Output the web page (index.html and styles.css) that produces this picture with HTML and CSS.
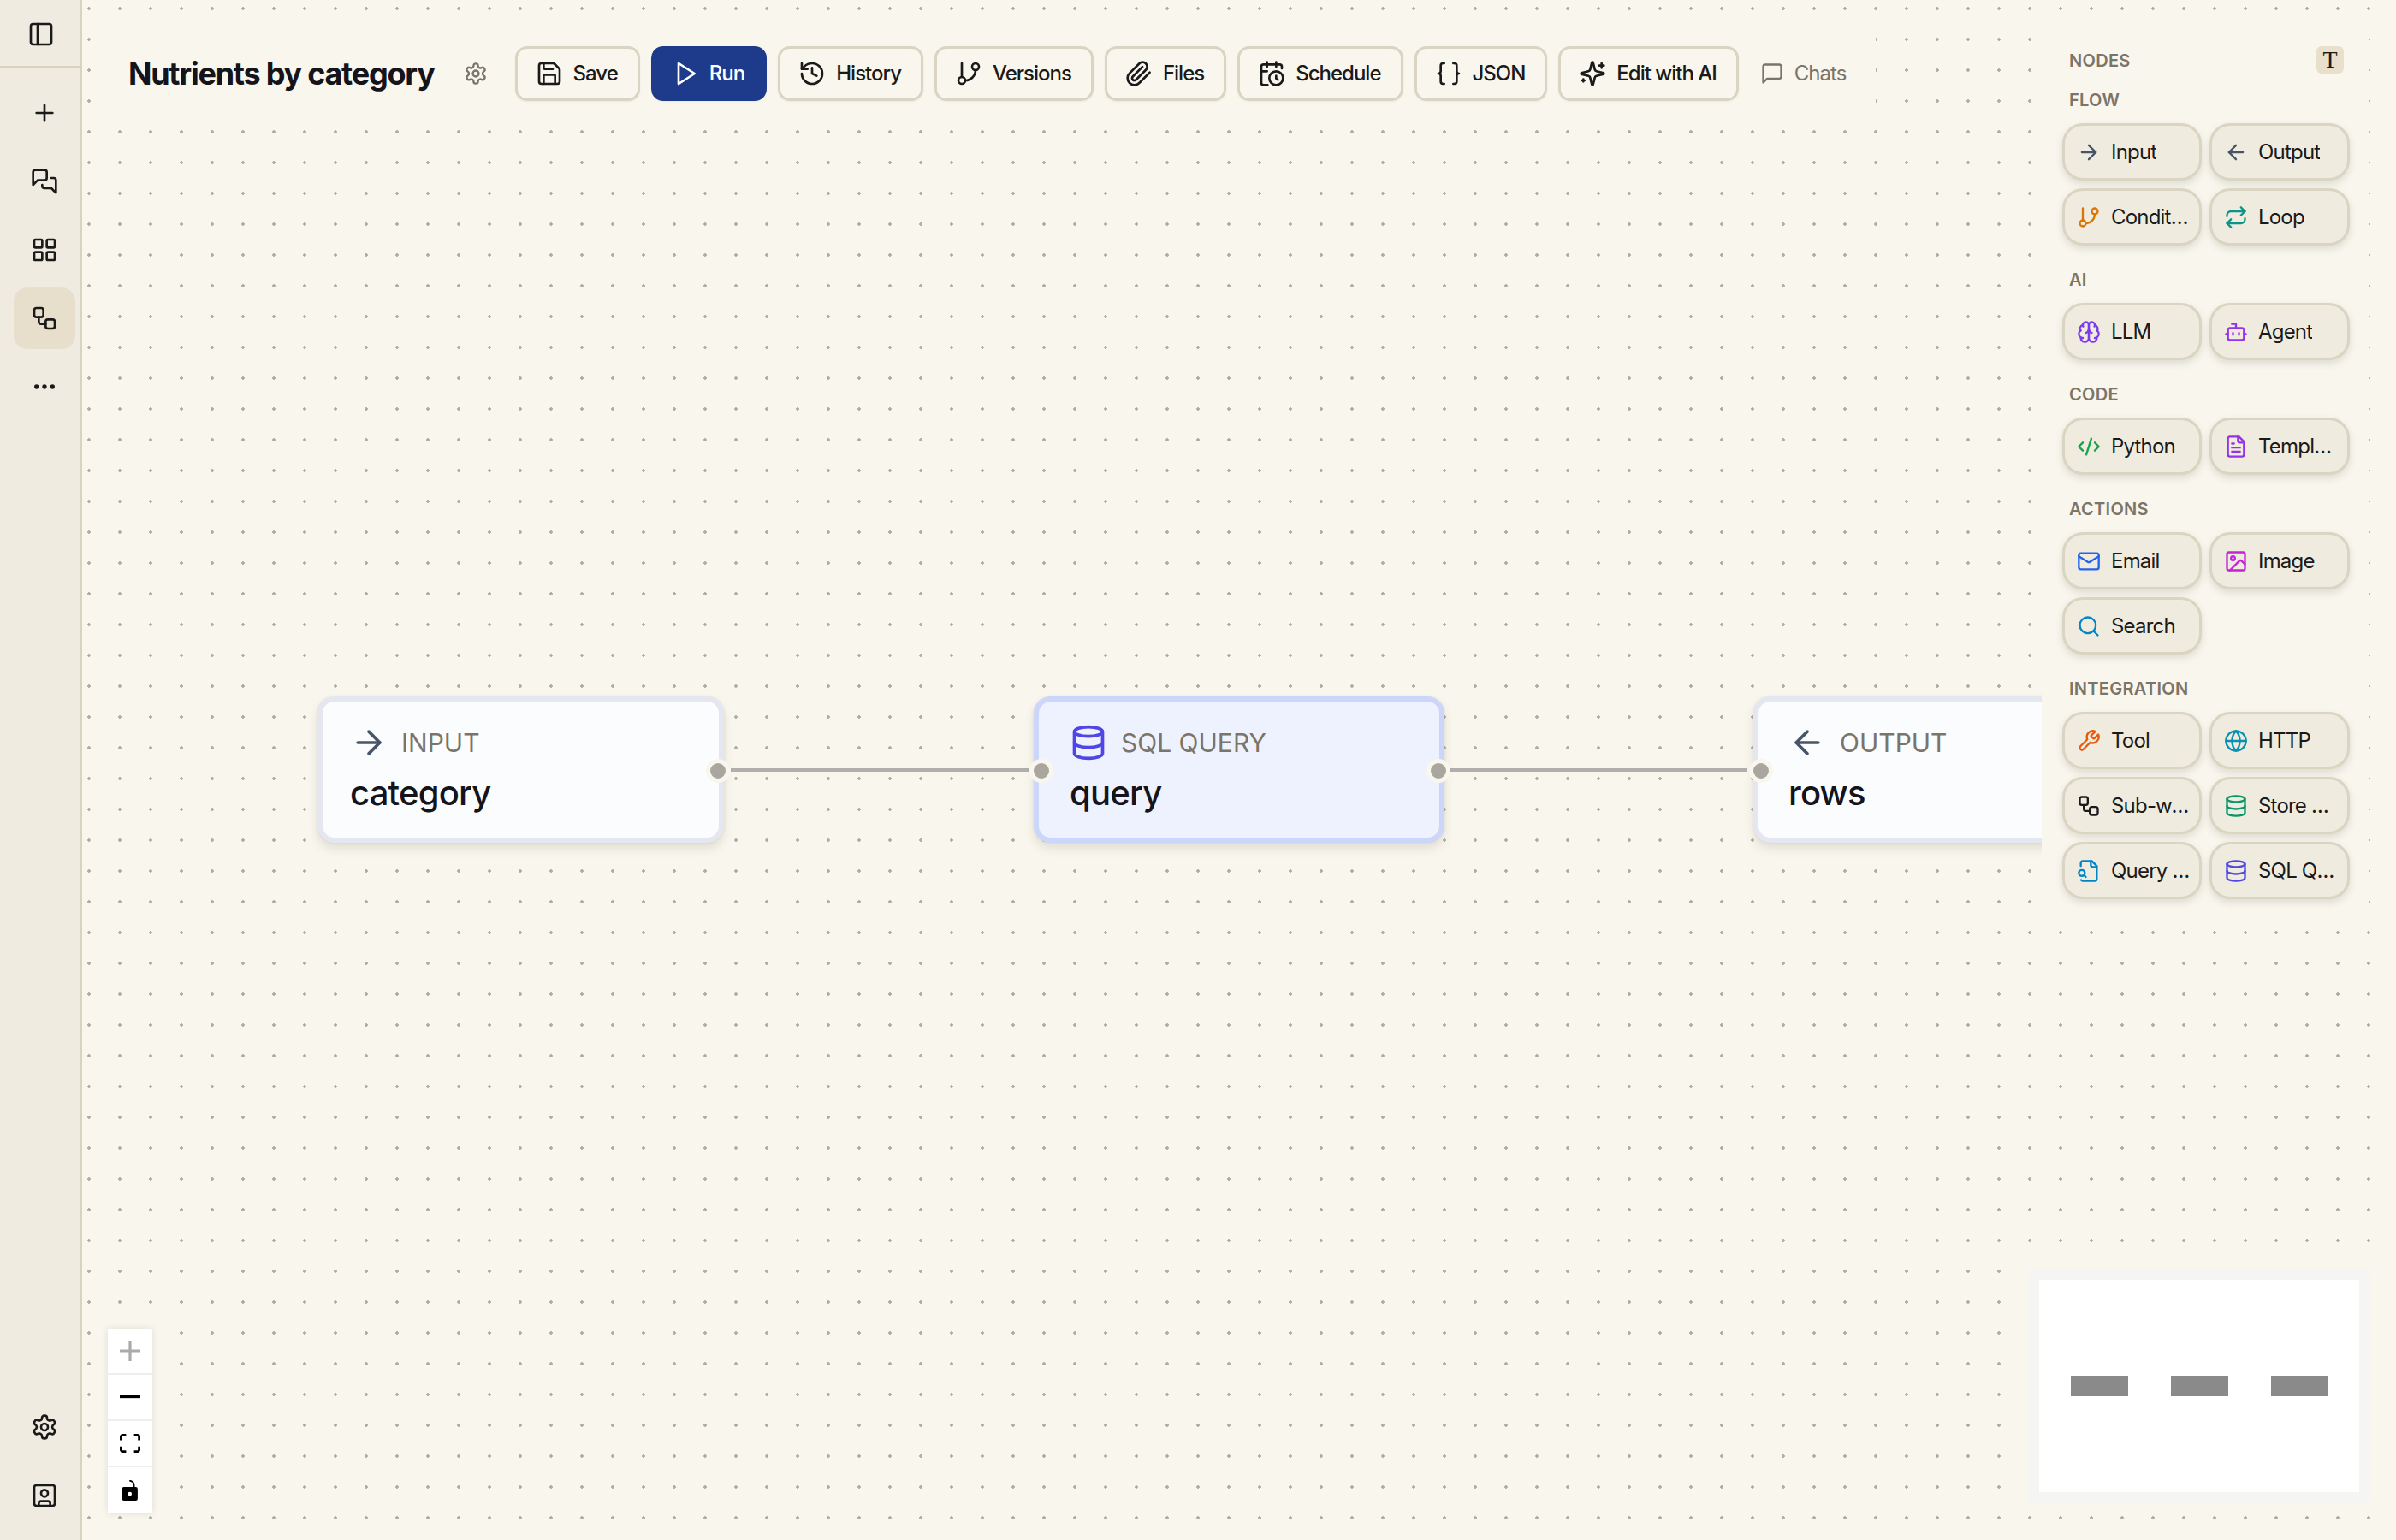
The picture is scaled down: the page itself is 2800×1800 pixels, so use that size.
FILE: index.html
```html
<!DOCTYPE html>
<html lang="en">
<head>
    <meta charset="UTF-8">
    <meta name="viewport" content="width=device-width, initial-scale=1.0">
    <title>Nutrients by category</title>
    <link rel="stylesheet" href="styles.css">
</head>
<body>
<svg class="sprite" xmlns="http://www.w3.org/2000/svg">
    <symbol id="i-panel" viewBox="0 0 24 24"><rect x="3" y="3" width="18" height="18" rx="2"/><path d="M9 3v18"/></symbol>
    <symbol id="i-plus" viewBox="0 0 24 24"><path d="M5 12h14M12 5v14"/></symbol>
    <symbol id="i-chats" viewBox="0 0 24 24"><path d="M14 9a2 2 0 0 1-2 2H6l-4 4V4a2 2 0 0 1 2-2h8a2 2 0 0 1 2 2z"/><path d="M18 9h2a2 2 0 0 1 2 2v11l-4-4h-6a2 2 0 0 1-2-2v-1"/></symbol>
    <symbol id="i-grid" viewBox="0 0 24 24"><rect x="3" y="3" width="7" height="7" rx="1"/><rect x="14" y="3" width="7" height="7" rx="1"/><rect x="14" y="14" width="7" height="7" rx="1"/><rect x="3" y="14" width="7" height="7" rx="1"/></symbol>
    <symbol id="i-workflow" viewBox="0 0 24 24"><rect x="3" y="3" width="8" height="8" rx="2"/><path d="M7 11v4a2 2 0 0 0 2 2h4"/><rect x="13" y="13" width="8" height="8" rx="2"/></symbol>
    <symbol id="i-more" viewBox="0 0 24 24"><circle cx="5" cy="12" r="1"/><circle cx="12" cy="12" r="1"/><circle cx="19" cy="12" r="1"/></symbol>
    <symbol id="i-gear" viewBox="0 0 24 24"><path d="M12.22 2h-.44a2 2 0 0 0-2 2v.18a2 2 0 0 1-1 1.73l-.43.25a2 2 0 0 1-2 0l-.15-.08a2 2 0 0 0-2.73.73l-.22.38a2 2 0 0 0 .73 2.73l.15.1a2 2 0 0 1 1 1.72v.51a2 2 0 0 1-1 1.74l-.15.09a2 2 0 0 0-.73 2.73l.22.38a2 2 0 0 0 2.73.73l.15-.08a2 2 0 0 1 2 0l.43.25a2 2 0 0 1 1 1.73V20a2 2 0 0 0 2 2h.44a2 2 0 0 0 2-2v-.18a2 2 0 0 1 1-1.73l.43-.25a2 2 0 0 1 2 0l.15.08a2 2 0 0 0 2.73-.73l.22-.39a2 2 0 0 0-.73-2.73l-.15-.08a2 2 0 0 1-1-1.74v-.5a2 2 0 0 1 1-1.74l.15-.09a2 2 0 0 0 .73-2.73l-.22-.38a2 2 0 0 0-2.73-.73l-.15.08a2 2 0 0 1-2 0l-.43-.25a2 2 0 0 1-1-1.73V4a2 2 0 0 0-2-2z"/><circle cx="12" cy="12" r="3"/></symbol>
    <symbol id="i-user" viewBox="0 0 24 24"><rect x="3" y="3" width="18" height="18" rx="2"/><circle cx="12" cy="10" r="3"/><path d="M7 21v-2a2 2 0 0 1 2-2h6a2 2 0 0 1 2 2v2"/></symbol>
    <symbol id="i-save" viewBox="0 0 24 24"><path d="M15.2 3a2 2 0 0 1 1.4.6l3.8 3.8a2 2 0 0 1 .6 1.4V19a2 2 0 0 1-2 2H5a2 2 0 0 1-2-2V5a2 2 0 0 1 2-2z"/><path d="M17 21v-7a1 1 0 0 0-1-1H8a1 1 0 0 0-1 1v7"/><path d="M7 3v4a1 1 0 0 0 1 1h7"/></symbol>
    <symbol id="i-play" viewBox="0 0 24 24"><polygon points="6 3 20 12 6 21 6 3"/></symbol>
    <symbol id="i-history" viewBox="0 0 24 24"><path d="M3 12a9 9 0 1 0 9-9 9.75 9.75 0 0 0-6.74 2.74L3 8"/><path d="M3 3v5h5"/><path d="M12 7v5l4 2"/></symbol>
    <symbol id="i-branch" viewBox="0 0 24 24"><path d="M6 3v12"/><circle cx="18" cy="6" r="3"/><circle cx="6" cy="18" r="3"/><path d="M18 9a9 9 0 0 1-9 9"/></symbol>
    <symbol id="i-clip" viewBox="0 0 24 24"><path d="m21.44 11.05-9.19 9.19a6 6 0 0 1-8.49-8.49l8.57-8.57A4 4 0 1 1 18 8.84l-8.59 8.57a2 2 0 0 1-2.83-2.83l8.49-8.48"/></symbol>
    <symbol id="i-calendar" viewBox="0 0 24 24"><path d="M21 7.5V6a2 2 0 0 0-2-2H5a2 2 0 0 0-2 2v14a2 2 0 0 0 2 2h3.5"/><path d="M16 2v4M8 2v4M3 10h5"/><path d="M17.5 17.5 16 16.3V14"/><circle cx="16" cy="16" r="6"/></symbol>
    <symbol id="i-braces" viewBox="0 0 24 24"><path d="M8 3H7a2 2 0 0 0-2 2v5a2 2 0 0 1-2 2 2 2 0 0 1 2 2v5c0 1.1.9 2 2 2h1"/><path d="M16 21h1a2 2 0 0 0 2-2v-5c0-1.1.9-2 2-2a2 2 0 0 1-2-2V5a2 2 0 0 0-2-2h-1"/></symbol>
    <symbol id="i-sparkles" viewBox="0 0 24 24"><path d="M9.937 15.5A2 2 0 0 0 8.5 14.063l-6.135-1.582a.5.5 0 0 1 0-.962L8.5 9.936A2 2 0 0 0 9.937 8.5l1.582-6.135a.5.5 0 0 1 .963 0L14.063 8.5A2 2 0 0 0 15.5 9.937l6.135 1.581a.5.5 0 0 1 0 .964L15.5 14.063a2 2 0 0 0-1.437 1.437l-1.582 6.135a.5.5 0 0 1-.963 0z"/><path d="M20 3v4M22 5h-4M4 17v2M5 18H3"/></symbol>
    <symbol id="i-message" viewBox="0 0 24 24"><path d="M21 15a2 2 0 0 1-2 2H7l-4 4V5a2 2 0 0 1 2-2h14a2 2 0 0 1 2 2z"/></symbol>
    <symbol id="i-right" viewBox="0 0 24 24"><path d="M5 12h14"/><path d="m12 5 7 7-7 7"/></symbol>
    <symbol id="i-left" viewBox="0 0 24 24"><path d="m12 19-7-7 7-7"/><path d="M19 12H5"/></symbol>
    <symbol id="i-repeat" viewBox="0 0 24 24"><path d="m17 2 4 4-4 4"/><path d="M3 11v-1a4 4 0 0 1 4-4h14"/><path d="m7 22-4-4 4-4"/><path d="M21 13v1a4 4 0 0 1-4 4H3"/></symbol>
    <symbol id="i-brain" viewBox="0 0 24 24"><path d="M12 5a3 3 0 1 0-5.997.125 4 4 0 0 0-2.526 5.77 4 4 0 0 0 .556 6.588A4 4 0 1 0 12 18Z"/><path d="M12 5a3 3 0 1 1 5.997.125 4 4 0 0 1 2.526 5.77 4 4 0 0 1-.556 6.588A4 4 0 1 1 12 18Z"/><path d="M15 13a4.5 4.5 0 0 1-3-4 4.5 4.5 0 0 1-3 4"/><path d="M17.599 6.5a3 3 0 0 0 .399-1.375"/><path d="M6.003 5.125A3 3 0 0 0 6.401 6.5"/><path d="M3.477 10.896a4 4 0 0 1 .585-.396"/><path d="M19.938 10.5a4 4 0 0 1 .585.396"/><path d="M6 18a4 4 0 0 1-1.967-.516"/><path d="M19.967 17.484A4 4 0 0 1 18 18"/></symbol>
    <symbol id="i-bot" viewBox="0 0 24 24"><path d="M12 8V4H8"/><rect x="4" y="8" width="16" height="12" rx="2"/><path d="M2 14h2M20 14h2M15 13v2M9 13v2"/></symbol>
    <symbol id="i-code" viewBox="0 0 24 24"><path d="m18 16 4-4-4-4"/><path d="m6 8-4 4 4 4"/><path d="m14.5 4-5 16"/></symbol>
    <symbol id="i-file" viewBox="0 0 24 24"><path d="M15 2H6a2 2 0 0 0-2 2v16a2 2 0 0 0 2 2h12a2 2 0 0 0 2-2V7Z"/><path d="M14 2v4a2 2 0 0 0 2 2h4"/><path d="M10 9H8M16 13H8M16 17H8"/></symbol>
    <symbol id="i-mail" viewBox="0 0 24 24"><rect x="2" y="4" width="20" height="16" rx="2"/><path d="m22 7-8.97 5.7a1.94 1.94 0 0 1-2.06 0L2 7"/></symbol>
    <symbol id="i-image" viewBox="0 0 24 24"><rect x="3" y="3" width="18" height="18" rx="2"/><circle cx="9" cy="9" r="2"/><path d="m21 15-3.086-3.086a2 2 0 0 0-2.828 0L6 21"/></symbol>
    <symbol id="i-search" viewBox="0 0 24 24"><circle cx="11" cy="11" r="8"/><path d="m21 21-4.3-4.3"/></symbol>
    <symbol id="i-wrench" viewBox="0 0 24 24"><path d="M14.7 6.3a1 1 0 0 0 0 1.4l1.6 1.6a1 1 0 0 0 1.4 0l3.77-3.77a6 6 0 0 1-7.94 7.94l-6.91 6.91a2.12 2.12 0 0 1-3-3l6.91-6.91a6 6 0 0 1 7.94-7.94l-3.76 3.76z"/></symbol>
    <symbol id="i-globe" viewBox="0 0 24 24"><circle cx="12" cy="12" r="10"/><path d="M12 2a14.5 14.5 0 0 0 0 20 14.5 14.5 0 0 0 0-20"/><path d="M2 12h20"/></symbol>
    <symbol id="i-database" viewBox="0 0 24 24"><ellipse cx="12" cy="5" rx="9" ry="3"/><path d="M3 5V19A9 3 0 0 0 21 19V5"/><path d="M3 12A9 3 0 0 0 21 12"/></symbol>
    <symbol id="i-file-search" viewBox="0 0 24 24"><path d="M14 2v4a2 2 0 0 0 2 2h4"/><path d="M4.268 21a2 2 0 0 0 1.727 1H18a2 2 0 0 0 2-2V7l-5-5H6a2 2 0 0 0-2 2v3"/><path d="m9 18-1.5-1.5"/><circle cx="5" cy="14" r="3"/></symbol>
</svg>

<div class="app">
    <aside class="sidebar">
        <div class="sidebar-head">
            <button class="side-toggle"><svg class="icon"><use href="#i-panel"/></svg></button>
        </div>
        <nav class="side-nav">
            <button class="side-btn"><svg class="icon"><use href="#i-plus"/></svg></button>
            <button class="side-btn"><svg class="icon"><use href="#i-chats"/></svg></button>
            <button class="side-btn"><svg class="icon"><use href="#i-grid"/></svg></button>
            <button class="side-btn active"><svg class="icon"><use href="#i-workflow"/></svg></button>
            <button class="side-btn"><svg class="icon"><use href="#i-more"/></svg></button>
        </nav>
        <div class="side-foot">
            <button class="side-btn"><svg class="icon"><use href="#i-gear"/></svg></button>
            <button class="side-btn"><svg class="icon"><use href="#i-user"/></svg></button>
        </div>
    </aside>

    <main class="canvas">
        <div class="edge edge-one"></div>
        <div class="edge edge-two"></div>

        <div class="node node-input">
            <div class="node-type"><svg class="icon node-icon slate"><use href="#i-right"/></svg>INPUT</div>
            <div class="node-name">category</div>
            <span class="handle handle-right"></span>
        </div>
        <div class="node node-sql">
            <div class="node-type"><svg class="icon node-icon indigo"><use href="#i-database"/></svg>SQL QUERY</div>
            <div class="node-name">query</div>
            <span class="handle handle-left"></span>
            <span class="handle handle-right"></span>
        </div>
        <div class="node node-output">
            <div class="node-type"><svg class="icon node-icon slate"><use href="#i-left"/></svg>OUTPUT</div>
            <div class="node-name">rows</div>
            <span class="handle handle-left"></span>
        </div>

        <header class="toolbar">
            <h1 class="title">Nutrients by category</h1>
            <button class="title-gear"><svg class="icon"><use href="#i-gear"/></svg></button>
            <button class="tool-btn"><svg class="icon"><use href="#i-save"/></svg>Save</button>
            <button class="tool-btn run"><svg class="icon"><use href="#i-play"/></svg>Run</button>
            <button class="tool-btn"><svg class="icon"><use href="#i-history"/></svg>History</button>
            <button class="tool-btn"><svg class="icon"><use href="#i-branch"/></svg>Versions</button>
            <button class="tool-btn"><svg class="icon"><use href="#i-clip"/></svg>Files</button>
            <button class="tool-btn"><svg class="icon"><use href="#i-calendar"/></svg>Schedule</button>
            <button class="tool-btn"><svg class="icon"><use href="#i-braces"/></svg>JSON</button>
            <button class="tool-btn"><svg class="icon"><use href="#i-sparkles"/></svg>Edit with AI</button>
            <button class="tool-btn chats"><svg class="icon"><use href="#i-message"/></svg>Chats</button>
        </header>

        <section class="palette">
            <div class="palette-head">
                <span class="palette-label">NODES</span>
                <button class="font-toggle">T</button>
            </div>

            <div class="palette-group">
                <div class="palette-label">FLOW</div>
                <div class="palette-grid">
                    <button class="pill"><svg class="icon slate"><use href="#i-right"/></svg><span>Input</span></button>
                    <button class="pill"><svg class="icon slate"><use href="#i-left"/></svg><span>Output</span></button>
                    <button class="pill"><svg class="icon amber"><use href="#i-branch"/></svg><span>Condition</span></button>
                    <button class="pill"><svg class="icon teal"><use href="#i-repeat"/></svg><span>Loop</span></button>
                </div>
            </div>

            <div class="palette-group">
                <div class="palette-label">AI</div>
                <div class="palette-grid">
                    <button class="pill"><svg class="icon violet"><use href="#i-brain"/></svg><span>LLM</span></button>
                    <button class="pill"><svg class="icon purple"><use href="#i-bot"/></svg><span>Agent</span></button>
                </div>
            </div>

            <div class="palette-group">
                <div class="palette-label">CODE</div>
                <div class="palette-grid">
                    <button class="pill"><svg class="icon green"><use href="#i-code"/></svg><span>Python</span></button>
                    <button class="pill"><svg class="icon purple"><use href="#i-file"/></svg><span>Template</span></button>
                </div>
            </div>

            <div class="palette-group">
                <div class="palette-label">ACTIONS</div>
                <div class="palette-grid">
                    <button class="pill"><svg class="icon blue"><use href="#i-mail"/></svg><span>Email</span></button>
                    <button class="pill"><svg class="icon fuchsia"><use href="#i-image"/></svg><span>Image</span></button>
                    <button class="pill"><svg class="icon sky"><use href="#i-search"/></svg><span>Search</span></button>
                </div>
            </div>

            <div class="palette-group">
                <div class="palette-label">INTEGRATION</div>
                <div class="palette-grid">
                    <button class="pill"><svg class="icon orange"><use href="#i-wrench"/></svg><span>Tool</span></button>
                    <button class="pill"><svg class="icon cyan"><use href="#i-globe"/></svg><span>HTTP</span></button>
                    <button class="pill"><svg class="icon"><use href="#i-workflow"/></svg><span>Sub-workflow</span></button>
                    <button class="pill"><svg class="icon emerald"><use href="#i-database"/></svg><span>Store Document</span></button>
                    <button class="pill"><svg class="icon sky"><use href="#i-file-search"/></svg><span>Query Documents</span></button>
                    <button class="pill"><svg class="icon indigo"><use href="#i-database"/></svg><span>SQL Query</span></button>
                </div>
            </div>
        </section>

        <div class="zoom-controls">
            <button class="zoom-btn disabled"><svg viewBox="0 0 32 32"><path d="M32 18.133H18.133V32h-4.266V18.133H0v-4.266h13.867V0h4.266v13.867H32z"/></svg></button>
            <button class="zoom-btn"><svg viewBox="0 0 32 5"><path d="M0 0h32v4.2H0z"/></svg></button>
            <button class="zoom-btn"><svg viewBox="0 0 32 30"><path d="M3.692 4.63c0-.53.4-.938.939-.938h5.215V0H4.708C2.13 0 0 2.054 0 4.63v5.216h3.692V4.631zM27.354 0h-5.2v3.692h5.17c.53 0 .984.4.984.939v5.215H32V4.631A4.624 4.624 0 0027.354 0zm.954 24.83c0 .532-.4.94-.939.94h-5.215v3.768h5.215c2.577 0 4.631-2.13 4.631-4.707v-5.139h-3.692v5.139zm-23.677.94c-.531 0-.939-.4-.939-.94v-5.138H0v5.139c0 2.577 2.13 4.707 4.708 4.707h5.138V25.77H4.631z"/></svg></button>
            <button class="zoom-btn"><svg viewBox="0 0 25 32"><path d="M21.333 10.667H19.81V7.619C19.81 3.429 16.38 0 12.19 0c-1.37 0-1.37 2.133.305 2.438 2.81.305 5.181 2.59 5.181 5.181v3.048H3.047A3.056 3.056 0 000 13.714v15.238A3.056 3.056 0 003.048 32h18.285a3.056 3.056 0 003.048-3.048V13.714a3.056 3.056 0 00-3.048-3.047zM12.19 24.533a3.056 3.056 0 01-3.047-3.047 3.056 3.056 0 013.047-3.048 3.056 3.056 0 013.048 3.048 3.056 3.056 0 01-3.048 3.047z"/></svg></button>
        </div>

        <div class="minimap">
            <span class="mini-node"></span>
            <span class="mini-node"></span>
            <span class="mini-node"></span>
        </div>
    </main>
</div>
</body>
</html>
```

FILE: styles.css
```css
* {
    box-sizing: border-box;
}

html, body {
    margin: 0;
    height: 100%;
}

body {
    font-family: Inter, 'Noto Sans', sans-serif;
    color: #1a1a1a;
    background-color: #f9f6ee;
    overflow: hidden;
}

button {
    font: inherit;
    color: inherit;
    background: none;
    border: none;
    padding: 0;
    cursor: pointer;
}

.sprite {
    display: none;
}

.icon {
    width: 32px;
    height: 32px;
    flex: none;
    fill: none;
    stroke: currentColor;
    stroke-width: 2;
    stroke-linecap: round;
    stroke-linejoin: round;
}

.app {
    display: flex;
    height: 1800px;
}

/* sidebar */
.sidebar {
    width: 96px;
    flex: none;
    display: flex;
    flex-direction: column;
    background-color: #efebe0;
    border-right: 3px solid #d8d3be;
}

.sidebar-head {
    height: 80px;
    display: flex;
    align-items: center;
    justify-content: center;
    padding: 3px 0 0 3px;
    border-bottom: 3px solid #d8d3be;
}

.side-toggle {
    display: flex;
}

.side-nav {
    display: flex;
    flex-direction: column;
    gap: 8px;
    padding: 16px 0 0 16px;
}

.side-foot {
    display: flex;
    flex-direction: column;
    gap: 8px;
    margin-top: auto;
    padding: 0 0 16px 16px;
}

.side-btn {
    width: 72px;
    height: 72px;
    display: flex;
    align-items: center;
    justify-content: center;
    border-radius: 16px;
}

.side-btn.active {
    background-color: #e7dfcb;
}

/* canvas */
.canvas {
    position: relative;
    flex: 1;
    overflow: hidden;
    background-color: #f9f6ee;
    background-image: radial-gradient(circle at 18px 18px, #aeaca4 1.5px, transparent 2.1px);
    background-size: 36px 36px;
    background-position: -10px -8px;
}

.edge {
    position: absolute;
    top: 898px;
    height: 4px;
    background-color: #b0afad;
}

.edge-one {
    left: 758px;
    width: 349px;
}

.edge-two {
    left: 1597px;
    width: 349px;
}

.node {
    position: absolute;
    top: 814px;
    height: 171px;
    padding: 26px 32px;
    border: 6px solid #e4e7f0;
    border-radius: 20px;
    background-color: #fbfcfe;
    box-shadow: 0 7px 12px rgba(90, 85, 60, 0.14), 0 0 3px rgba(90, 85, 60, 0.12);
}

.node-input {
    left: 275px;
    width: 475px;
}

.node-sql {
    left: 1112px;
    width: 480px;
    padding-left: 36px;
    border-color: #ccd6fb;
    background-color: #edf2fe;
}

.node-output {
    left: 1953px;
    width: 480px;
    padding-left: 35px;
}

.node-type {
    display: flex;
    align-items: center;
    gap: 16px;
    height: 44px;
    font-size: 30px;
    color: #7a7568;
}

.node-icon {
    width: 44px;
    height: 44px;
}

.node-name {
    margin-top: 13px;
    font-size: 40px;
    font-weight: 500;
    line-height: 48px;
    letter-spacing: -0.8px;
    color: #14141a;
}

.handle {
    position: absolute;
    top: 67px;
    width: 28px;
    height: 28px;
    border: 5px solid #f9f6ee;
    border-radius: 50%;
    background-color: #a8a69f;
}

.handle-right {
    right: -13px;
}

.handle-left {
    left: -11px;
}

/* top toolbar */
.toolbar {
    position: absolute;
    top: 28px;
    left: 22px;
    width: 2074px;
    height: 115px;
    padding-left: 32px;
    display: flex;
    align-items: center;
    gap: 13px;
    background-color: #f9f6ee;
}

.title {
    margin: 0;
    font-size: 36px;
    font-weight: 700;
    letter-spacing: -1.25px;
    color: #14141a;
    white-space: nowrap;
}

.title-gear {
    display: flex;
    margin: 0 19px 0 21px;
    color: #7a7568;
}

.title-gear .icon {
    width: 28px;
    height: 28px;
}

.tool-btn {
    height: 64px;
    display: flex;
    align-items: center;
    gap: 12px;
    padding: 0 23px 0 21px;
    border: 3px solid #dad5c2;
    border-radius: 14px;
    font-size: 24px;
    font-weight: 500;
    letter-spacing: -1px;
    white-space: nowrap;
    box-shadow: 0 1px 2px rgba(90, 85, 60, 0.08);
}

.tool-btn.run {
    color: #fff;
    background-color: #1e3a8a;
    border-color: #1e3a8a;
}

.tool-btn.chats {
    padding: 0 0 0 12px;
    border: none;
    box-shadow: none;
    font-weight: 400;
    color: #7a7568;
}

.tool-btn.chats .icon {
    width: 28px;
    height: 28px;
}

/* node palette */
.palette {
    position: absolute;
    top: 34px;
    left: 2290px;
    width: 382px;
    height: 1038px;
    padding: 20px 21px 0 24px;
    background-color: #f9f6ee;
}

.palette-head {
    display: flex;
    align-items: center;
    justify-content: space-between;
    height: 32px;
    padding: 0 8px 0 8px;
    margin-bottom: 18px;
}

.palette-label {
    height: 24px;
    font-size: 20px;
    font-weight: 600;
    line-height: 26px;
    letter-spacing: 0.3px;
    color: #7a7568;
}

.palette-group {
    margin-bottom: 27px;
}

.palette-group > .palette-label {
    margin: 0 0 16px 8px;
}

.font-toggle {
    width: 32px;
    height: 32px;
    display: flex;
    align-items: center;
    justify-content: center;
    font-family: 'Liberation Serif', serif;
    font-size: 28px;
    background-color: #e8e0cb;
    border-radius: 6px;
}

.palette-grid {
    display: grid;
    grid-template-columns: 163px 164px;
    gap: 9px;
}

.pill {
    height: 67px;
    display: flex;
    align-items: center;
    gap: 12px;
    padding: 0 8px 0 14px;
    text-align: left;
    font-size: 24px;
    letter-spacing: -0.8px;
    background-color: #efebdf;
    border: 3px solid #dad5c2;
    border-radius: 24px;
    box-shadow: 0 4px 8px rgba(90, 85, 60, 0.16);
}

.pill .icon {
    width: 28px;
    height: 28px;
}

.pill span {
    min-width: 0;
    overflow: hidden;
    white-space: nowrap;
    text-overflow: ellipsis;
}

.slate { color: #475569; }
.amber { color: #d97706; }
.teal { color: #0d9488; }
.violet { color: #7c3aed; }
.purple { color: #9333ea; }
.green { color: #16a34a; }
.blue { color: #2563eb; }
.fuchsia { color: #c026d3; }
.sky { color: #0284c7; }
.orange { color: #ea580c; }
.cyan { color: #0891b2; }
.emerald { color: #059669; }
.indigo { color: #4f46e5; }

/* zoom controls */
.zoom-controls {
    position: absolute;
    left: 30px;
    top: 1553px;
    width: 52px;
    display: flex;
    flex-direction: column;
    box-shadow: 0 0 8px rgba(0, 0, 0, 0.1);
}

.zoom-btn {
    height: 54px;
    display: flex;
    align-items: center;
    justify-content: center;
    background-color: #fff;
    border-bottom: 2px solid #eee;
}

.zoom-btn:last-child {
    border-bottom: none;
}

.zoom-btn svg {
    width: 24px;
    max-height: 24px;
    fill: #000;
}

.zoom-btn.disabled svg {
    fill: #aaa;
}

/* minimap */
.minimap {
    position: absolute;
    left: 2287px;
    top: 1496px;
    width: 374px;
    height: 248px;
    display: flex;
    align-items: center;
    justify-content: center;
    gap: 50px;
    background-color: #fff;
    box-shadow: 0 0 0 13px #f5f5f4;
}

.mini-node {
    width: 67px;
    height: 24px;
    background-color: #8a8a8a;
}
```
